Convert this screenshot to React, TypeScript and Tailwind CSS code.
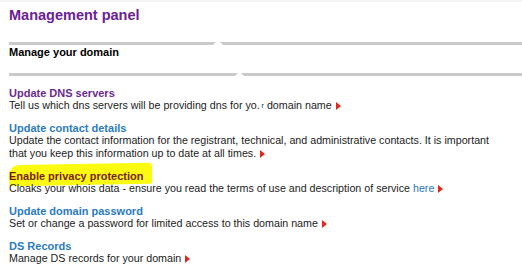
import React from "react";

const Arrow = () => (
  <span className="inline-block ml-[4px] w-0 h-0 border-y-[4px] border-y-transparent border-l-[5px] border-l-[#e3261a] align-[-1px]" />
);

const Bar = ({ left, gap }: { left: string; gap: string }) => (
  <div className={`flex h-[3px] ${gap}`}>
    <div className={`${left} bg-[#cacaca] [clip-path:polygon(0_0,100%_0,calc(100%-3px)_100%,0_100%)]`} />
    <div className="flex-1 bg-[#cacaca] [clip-path:polygon(0_0,100%_0,100%_100%,3px_100%)]" />
  </div>
);

export default function App() {
  return (
    <div className="w-[522px] h-[278px] bg-white overflow-hidden font-['Liberation_Sans',Arial,sans-serif] text-[#1c1c1c]">
      <div className="h-[2px] bg-[#f3f3f3]" />
      <div className="pl-[9px]">
        <h1 className="mt-[4px] text-[14.5px] leading-[18px] font-bold text-[#6a2196]">Management panel</h1>
        <div className="mt-[18px]">
          <Bar left="w-[207px]" gap="gap-[4px]" />
        </div>
        <div className="mt-[1px] text-[11px] leading-[12px] font-bold text-black">Manage your domain</div>
        <div className="mt-[15px]">
          <Bar left="w-[229px]" gap="gap-[3px]" />
        </div>

        <div className="mt-[11px] text-[11px]">
          <div className="mb-[10px]">
            <div className="leading-[12px] font-bold text-[#6b2a93]">Update DNS servers</div>
            <div className="leading-[13px] text-[10.7px]">
              Tell us which dns servers will be providing dns for yo.<span className="text-[7px] align-top"> r</span> domain name
              <Arrow />
            </div>
          </div>

          <div className="mb-[10px]">
            <div className="leading-[12px] font-bold text-[#2b7bbf]">Update contact details</div>
            <div className="leading-[13px] text-[10.7px]">
              Update the contact information for the registrant, technical, and administrative contacts. It is important
              <br />
              that you keep this information up to date at all times.
              <Arrow />
            </div>
          </div>

          <div className="mb-[10px]">
            <div className="relative leading-[12px] font-bold text-[#7a1c0c]">
              <span className="absolute left-0 top-[-6px] w-[143px] h-[21px] bg-[#fbfb12] rounded-tl-[10px] rounded-tr-[3px] rounded-b-[2px] -rotate-[1deg]" />
              <span className="relative">Enable privacy protection</span>
            </div>
            <div className="relative leading-[13px] text-[10.7px]">
              Cloaks your whois data - ensure you read the terms of use and description of service{" "}
              <span className="text-[#1f78c4]">here</span>
              <Arrow />
            </div>
          </div>

          <div className="mb-[10px]">
            <div className="leading-[12px] font-bold text-[#2b7bbf]">Update domain password</div>
            <div className="leading-[13px] text-[10.7px]">
              Set or change a password for limited access to this domain name
              <Arrow />
            </div>
          </div>

          <div>
            <div className="leading-[12px] font-bold text-[#2b7bbf]">DS Records</div>
            <div className="leading-[13px] text-[10.7px]">
              Manage DS records for your domain
              <Arrow />
            </div>
          </div>
        </div>
      </div>
    </div>
  );
}
